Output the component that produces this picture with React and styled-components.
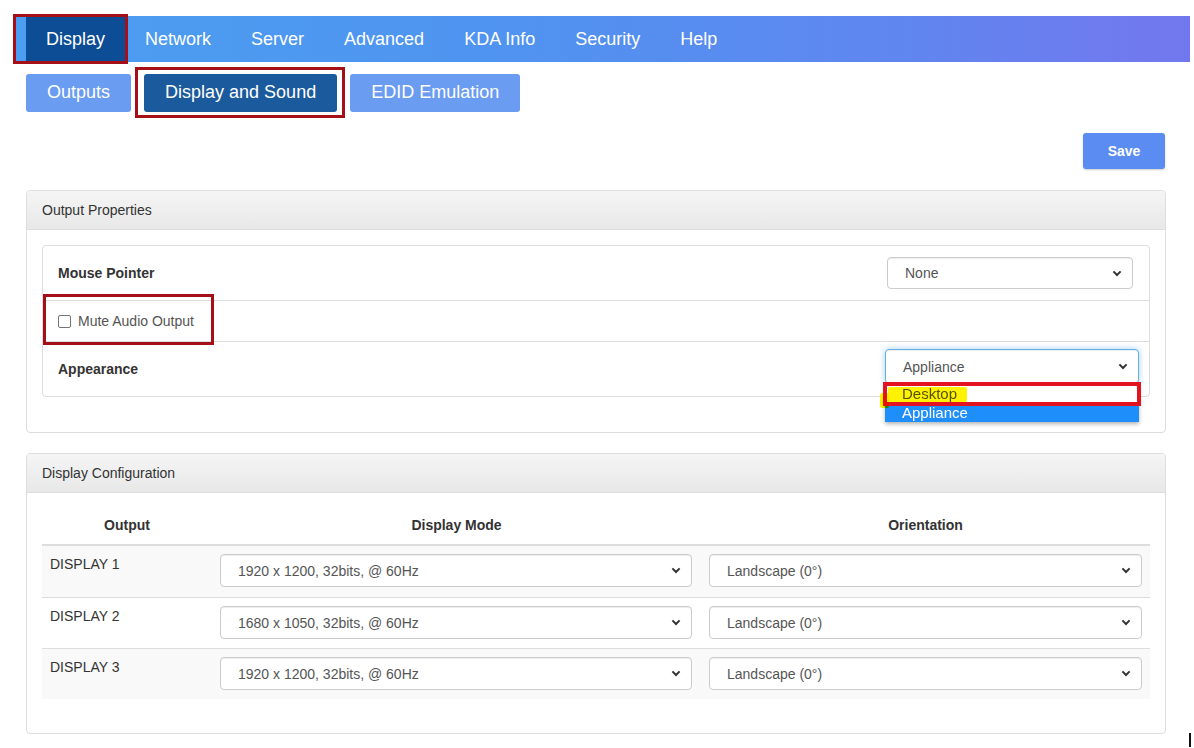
import React from 'react';
import styled, { createGlobalStyle, css } from 'styled-components';

const GlobalStyle = createGlobalStyle`
  html, body {
    margin: 0;
    padding: 0;
    background: #ffffff;
    font-family: "Liberation Sans", Arial, sans-serif;
    color: #333;
  }
  * { box-sizing: border-box; }
`;

const Page = styled.div`
  position: relative;
  width: 1194px;
  height: 748px;
  padding: 16px 4px 0 16px;
  overflow: hidden;
`;

const NavBar = styled.nav`
  display: flex;
  align-items: stretch;
  height: 46px;
  padding-left: 10px;
  background: linear-gradient(90deg, #4b9ef1 0%, #4f94f0 40%, #5f86ef 75%, #7377ee 100%);
`;

const NavItem = styled.div`
  position: relative;
  display: flex;
  align-items: center;
  padding: 0 20px;
  font-size: 18px;
  color: #ffffff;
  background: ${(p) => (p.$active ? '#0d4d95' : 'transparent')};
`;

const Mark = styled.div`
  position: absolute;
  top: ${(p) => p.$t}px;
  left: ${(p) => p.$l}px;
  width: ${(p) => p.$w}px;
  height: ${(p) => p.$h}px;
  border: ${(p) => p.$th || 3}px solid ${(p) => p.$color || '#a50f18'};
  pointer-events: none;
  z-index: 5;
`;

const Content = styled.div`
  padding: 0 24px 0 10px;
`;

const SubTabs = styled.div`
  display: flex;
  gap: 13px;
  margin-top: 12px;
`;

const SubTab = styled.div`
  position: relative;
  height: 38px;
  display: flex;
  align-items: center;
  padding: 0 21px 1px 21px;
  font-size: 18px;
  color: #ffffff;
  border-radius: 3px;
  background: ${(p) => (p.$active ? '#1b5a9c' : '#6a9cf1')};
`;

const SaveRow = styled.div`
  display: flex;
  justify-content: flex-end;
  margin-top: 21px;
  padding-right: 1px;
`;

const SaveButton = styled.div`
  width: 82px;
  height: 36px;
  display: flex;
  align-items: center;
  justify-content: center;
  background: #5b8cf1;
  color: #ffffff;
  font-size: 14px;
  font-weight: bold;
  border-radius: 3px;
  box-shadow: 0 1px 2px rgba(0, 0, 0, 0.2);
`;

const Panel = styled.section`
  margin-top: ${(p) => p.$mt}px;
  border: 1px solid #dddddd;
  border-radius: 4px;
  height: ${(p) => p.$h}px;
`;

const PanelHeader = styled.div`
  height: 39px;
  display: flex;
  align-items: center;
  padding-left: 15px;
  font-size: 14px;
  color: #333;
  background: linear-gradient(180deg, #f5f5f5 0%, #e8e8e8 100%);
  border-bottom: 1px solid #dddddd;
  border-radius: 3px 3px 0 0;
`;

const PanelBody = styled.div`
  padding: ${(p) => p.$pt}px 15px 0 15px;
`;

const InnerBox = styled.div`
  border: 1px solid #dddddd;
  border-radius: 4px;
`;

const PropRow = styled.div`
  position: relative;
  display: flex;
  align-items: center;
  justify-content: space-between;
  height: ${(p) => p.$h}px;
  padding: 0 16px 0 15px;
  ${(p) => p.$divider && css`border-top: 1px solid #dddddd;`}
`;

const Label = styled.div`
  font-size: 14px;
  font-weight: bold;
  color: #333;
`;

const CheckLabel = styled.label`
  display: flex;
  align-items: center;
  gap: 7px;
  font-size: 14px;
  color: #555;
`;

const CheckBox = styled.span`
  width: 13px;
  height: 13px;
  border: 1px solid #767676;
  border-radius: 2px;
  background: #fff;
`;

const SelectBox = styled.div`
  position: relative;
  display: flex;
  align-items: center;
  justify-content: space-between;
  width: ${(p) => p.$w}px;
  height: ${(p) => p.$h || 33}px;
  padding: 0 10px 0 17px;
  font-size: 14px;
  color: #555;
  background: #fff;
  border: 1px solid ${(p) => (p.$focus ? '#66afe9' : '#cccccc')};
  border-radius: 4px;
  box-shadow: ${(p) =>
    p.$focus
      ? 'inset 0 1px 1px rgba(0,0,0,.075), 0 0 6px rgba(102,175,233,.6)'
      : 'inset 0 1px 1px rgba(0,0,0,.075)'};
  margin-right: ${(p) => p.$mr || 0}px;
  ${(p) =>
    p.$top !== undefined &&
    css`
      align-self: flex-start;
      margin-top: ${p.$top}px;
    `}
`;

const Chevron = () => (
  <svg width="10" height="7" viewBox="0 0 10 7">
    <path d="M1.4 1.4 L5 5 L8.6 1.4" fill="none" stroke="#333" strokeWidth="2" />
  </svg>
);

const DropList = styled.div`
  position: absolute;
  top: 34px;
  left: -1px;
  right: -1px;
  background: #fff;
  box-shadow: 0 2px 4px rgba(0, 0, 0, 0.3);
  z-index: 4;
`;

const DropOption = styled.div`
  position: relative;
  height: 19px;
  display: flex;
  align-items: center;
  padding-left: 17px;
  font-size: 15px;
  color: ${(p) => (p.$selected ? '#ffffff' : '#555')};
  background: ${(p) => (p.$selected ? '#1e8ffa' : '#ffffff')};
`;

const Highlight = styled.div`
  position: absolute;
  top: ${(p) => p.$t}px;
  left: ${(p) => p.$l}px;
  width: ${(p) => p.$w}px;
  height: ${(p) => p.$h}px;
  background: #fff200;
  mix-blend-mode: multiply;
  border-radius: 2px;
  z-index: 6;
`;

const Table = styled.div`
  display: grid;
  grid-template-columns: 170px 489px 449px;
`;

const HeadCell = styled.div`
  height: 41px;
  display: flex;
  align-items: center;
  justify-content: center;
  font-size: 14px;
  font-weight: bold;
  color: #333;
  border-bottom: 2px solid #dddddd;
`;

const Cell = styled.div`
  height: 51px;
  padding: 8px 8px 0 8px;
  background: ${(p) => (p.$striped ? '#f9f9f9' : '#ffffff')};
  ${(p) => p.$divider && css`border-top: 1px solid #dddddd;`}
  font-size: 14px;
  color: #333;
  line-height: 16px;
`;

const OutputName = styled.div`
  padding-top: 2px;
`;

const Caret = styled.div`
  position: absolute;
  left: 1189px;
  top: 733px;
  width: 2px;
  height: 14px;
  background: #111;
`;

const navItems = ['Display', 'Network', 'Server', 'Advanced', 'KDA Info', 'Security', 'Help'];

const displays = [
  { name: 'DISPLAY 1', mode: '1920 x 1200, 32bits, @ 60Hz' },
  { name: 'DISPLAY 2', mode: '1680 x 1050, 32bits, @ 60Hz' },
  { name: 'DISPLAY 3', mode: '1920 x 1200, 32bits, @ 60Hz' },
];

export default function App() {
  return (
    <Page>
      <GlobalStyle />
      <NavBar>
        {navItems.map((item, i) => (
          <NavItem key={item} $active={i === 0}>
            {item}
            {i === 0 && <Mark $t={-2} $l={-13} $w={115} $h={50} />}
          </NavItem>
        ))}
      </NavBar>

      <Content>
        <SubTabs>
          <SubTab>Outputs</SubTab>
          <SubTab $active>
            Display and Sound
            <Mark $t={-7} $l={-9} $w={210} $h={51} />
          </SubTab>
          <SubTab>EDID Emulation</SubTab>
        </SubTabs>

        <SaveRow>
          <SaveButton>Save</SaveButton>
        </SaveRow>

        <Panel $mt={21} $h={243}>
          <PanelHeader>Output Properties</PanelHeader>
          <PanelBody $pt={15}>
            <InnerBox>
              <PropRow $h={54}>
                <Label>Mouse Pointer</Label>
                <SelectBox $w={246} $h={32}>
                  None
                  <Chevron />
                </SelectBox>
              </PropRow>
              <PropRow $h={41} $divider>
                <CheckLabel>
                  <CheckBox />
                  Mute Audio Output
                </CheckLabel>
                <Mark $t={-7} $l={0} $w={171} $h={51} />
              </PropRow>
              <PropRow $h={55} $divider>
                <Label>Appearance</Label>
                <SelectBox $w={254} $h={35} $focus $mr={-6} $top={7}>
                  Appliance
                  <Chevron />
                  <DropList>
                    <DropOption>Desktop</DropOption>
                    <DropOption $selected>Appliance</DropOption>
                    <Mark $t={-2} $l={-2} $w={258} $h={24} $th={4} $color="#e3141f" />
                    <Highlight $t={3} $l={3} $w={79} $h={15} />
                    <Highlight $t={9} $l={-5} $w={9} $h={15} />
                  </DropList>
                </SelectBox>
              </PropRow>
            </InnerBox>
          </PanelBody>
        </Panel>

        <Panel $mt={20} $h={281}>
          <PanelHeader>Display Configuration</PanelHeader>
          <PanelBody $pt={12}>
            <Table>
              <HeadCell>Output</HeadCell>
              <HeadCell>Display Mode</HeadCell>
              <HeadCell>Orientation</HeadCell>
              {displays.map((d, i) => (
                <React.Fragment key={d.name}>
                  <Cell $striped={i % 2 === 0} $divider={i > 0}>
                    <OutputName>{d.name}</OutputName>
                  </Cell>
                  <Cell $striped={i % 2 === 0} $divider={i > 0}>
                    <SelectBox $w={472}>
                      {d.mode}
                      <Chevron />
                    </SelectBox>
                  </Cell>
                  <Cell $striped={i % 2 === 0} $divider={i > 0}>
                    <SelectBox $w={433}>
                      Landscape (0°)
                      <Chevron />
                    </SelectBox>
                  </Cell>
                </React.Fragment>
              ))}
            </Table>
          </PanelBody>
        </Panel>
      </Content>
      <Caret />
    </Page>
  );
}
